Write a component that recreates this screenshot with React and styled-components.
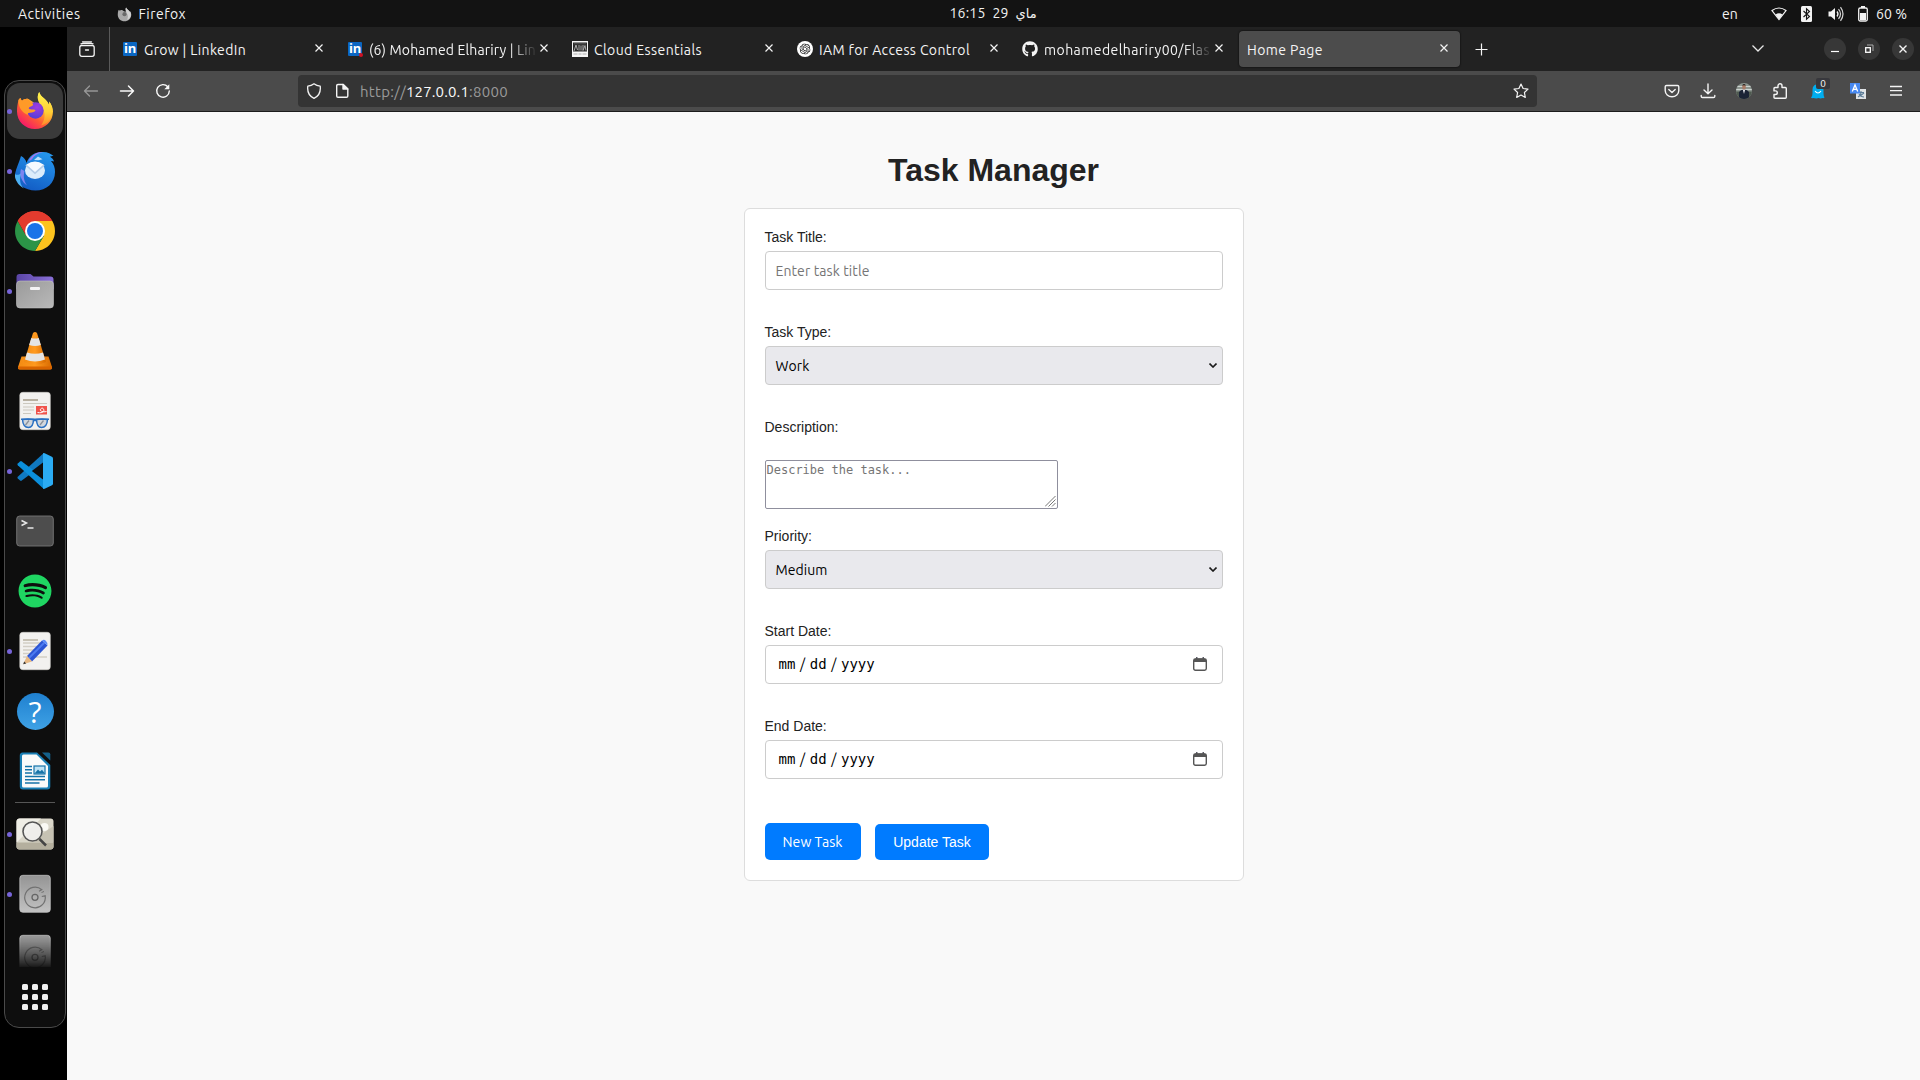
import React, { useLayoutEffect, useRef, useState } from "react";
import styled, { createGlobalStyle, css } from "styled-components";
import { FaGithub, FaSpotify } from "react-icons/fa";
import { SiOpenai } from "react-icons/si";

const UI = `"Ubuntu", "Noto Sans", "Open Sans", sans-serif`;

const GlobalStyle = createGlobalStyle`
  html, body { margin: 0; padding: 0; background: #000; overflow: hidden; }
  *, *::before, *::after { box-sizing: border-box; }
  svg { display: block; flex: none; }
`;

/* ---------- text that keeps a given width ---------- */

const FitSpan = styled.span`
  display: inline-block;
  white-space: nowrap;
  flex: none;
`;

function Fit({ width, children }) {
  const ref = useRef(null);
  const [spacing, setSpacing] = useState(0);
  useLayoutEffect(() => {
    const el = ref.current;
    el.style.letterSpacing = "0px";
    const natural = el.getBoundingClientRect().width;
    const next = (width - natural) / String(children).length;
    el.style.letterSpacing = `${next}px`;
    setSpacing(next);
  }, [width, children]);
  return (
    <FitSpan ref={ref} style={{ letterSpacing: `${spacing}px` }}>
      {children}
    </FitSpan>
  );
}

/* ---------- desktop ---------- */

const Desktop = styled.div`
  width: 1920px;
  height: 1080px;
  display: flex;
  flex-direction: column;
  background: #000;
  font-family: ${UI};
  overflow: hidden;
`;

const TopBar = styled.header`
  height: 27px;
  flex: none;
  background: #131313;
  color: #f2f2f2;
  display: grid;
  grid-template-columns: 1fr auto 1fr;
  align-items: center;
  font-size: 14px;
  line-height: 27px;
`;

const TopLeft = styled.div`
  display: flex;
  align-items: center;
  padding-left: 18px;
  ${FitSpan} { padding-top: 1px; }
`;

const AppMenu = styled.div`
  display: flex;
  align-items: center;
  gap: 7px;
  margin-left: 36px;
`;

const Clock = styled.div`
  display: flex;
  align-items: center;
  align-self: start;
  gap: 7px;
  padding: 1px 0 0 66px;
  direction: ltr;
  line-height: 25px;
`;

const ArabicWord = styled.span`
  font-family: "DejaVu Sans", sans-serif;
  font-size: 13px;
  width: 21px;
  margin-top: -1px;
`;

const TopRight = styled.div`
  display: flex;
  align-items: center;
  justify-content: flex-end;
  padding-right: 13px;
  ${FitSpan} { padding-top: 1px; }
`;

const Tray = styled.div`
  display: flex;
  align-items: center;
  margin: 0 8px 0 33px;
  padding-bottom: 1px;
  svg:nth-child(2) { margin-left: 14px; }
  svg:nth-child(3) { margin-left: 16px; }
  svg:nth-child(4) { margin-left: 14px; }
`;

const Body = styled.div`
  flex: 1;
  display: flex;
  min-height: 0;
`;

/* ---------- dock ---------- */

const DockColumn = styled.aside`
  width: 67px;
  flex: none;
  padding: 53px 0 0 4px;
  background: #000;
`;

const DockPanel = styled.div`
  width: 62px;
  height: 948px;
  border: 1px solid #4a4a4a;
  border-radius: 15px;
  background: #0e0e0e;
  display: flex;
  flex-direction: column;
`;

const DockItem = styled.div`
  height: 60px;
  flex: none;
  display: grid;
  grid-template-columns: 10px 40px 10px;
  align-items: center;
  ${(p) =>
    p.$clipped &&
    css`
      height: 43px;
      align-items: start;
      padding-top: 10px;
      overflow: hidden;
      mask-image: linear-gradient(#000 30%, transparent 105%);
    `}
`;

const DockTile = styled.div`
  height: 56px;
  width: 56px;
  margin: 2px;
  border-radius: 13px;
  background: #3a3a3a;
  display: grid;
  grid-template-columns: 8px 40px 8px;
  align-items: center;
`;

const Dot = styled.i`
  width: 5px;
  height: 5px;
  border-radius: 50%;
  margin-left: ${(p) => p.$x ?? 2}px;
  background: ${(p) => (p.$on ? "#7764d8" : "transparent")};
`;

const DockRule = styled.div`
  height: 1px;
  margin: 1px 10px;
  background: #565656;
  flex: none;
`;

const AppGrid = styled.div`
  height: 60px;
  display: grid;
  grid-template-columns: repeat(3, 6px);
  grid-template-rows: repeat(3, 6px);
  gap: 4px;
  place-content: center;
  i { background: #f2f2f2; border-radius: 1.5px; }
`;

const Svg = ({ s = 40, w, h, vb, children, ...r }) => (
  <svg width={w || s} height={h || s} viewBox={vb || `0 0 ${w || s} ${h || s}`} fill="none" {...r}>
    {children}
  </svg>
);

const FirefoxArt = ({ s = 40 }) => (
  <svg width={s} height={s} viewBox="0 0 40 40">
    <defs>
      <linearGradient id="ffBody" x1="0.85" y1="0.1" x2="0.2" y2="0.95">
        <stop offset="0" stopColor="#fff44f" />
        <stop offset="0.35" stopColor="#ffb02e" />
        <stop offset="0.65" stopColor="#ff5a36" />
        <stop offset="1" stopColor="#f5156c" />
      </linearGradient>
      <linearGradient id="ffFlame" x1="0.5" y1="0" x2="0.5" y2="1">
        <stop offset="0" stopColor="#fff44f" />
        <stop offset="0.6" stopColor="#ffcf35" />
        <stop offset="1" stopColor="#ff8a2a" />
      </linearGradient>
      <radialGradient id="ffGlobe" cx="0.6" cy="0.3" r="0.8">
        <stop offset="0" stopColor="#a13be0" />
        <stop offset="1" stopColor="#4a3fd6" />
      </radialGradient>
    </defs>
    <path d="M3.500 9c.6-.9 1.300-1.500 2-2 .2 1.200.7 2 1.500 2.800C8.500 8.200 11 7.300 13.500 8l6 4h6c-3-3-3.500-7-1.300-11 .5 2.500 2.500 4.500 5 6.500 2.300 1.900 3.800 3.800 4.600 6.200.4-.9.500-2 .4-3.200C36.700 13.500 38 17.300 38 20.500 38 30.500 30 38 20 38S2 30.500 2 20.500C2 16 2.600 12.500 3.500 9z" fill="url(#ffBody)" />
    <path d="M24.200 1c.5 2.500 2.500 4.500 5 6.500 2.300 1.900 3.800 3.800 4.600 6.200.4-.9.500-2 .4-3.200 3.500 5 3.800 10 2.300 14.500-2 5.500-6 8.500-10.500 9.500 3-4 4.500-9 3-14-1-3.500-3.500-6.500-5-9-1.500-3.500-2-6.500.2-10.500z" fill="url(#ffFlame)" />
    <circle cx="20.500" cy="19.500" r="8.200" fill="url(#ffGlobe)" />
    <path d="M3.500 9c.6-.9 1.300-1.500 2-2 .2 1.200.7 2 1.500 2.800C8.500 8.200 11 7.300 13.500 8c.3 1.500 1.500 3 3.500 3.800 1.500 1.300 1.500 2.200 0 3.200-1.500 1-3.200 1.200-3.200 2.200 0 1.300 3 1 6 1.500 1.500.3 0 2.500-3 2.800-3 .2-4.500.5-4 2.500C8 22 3 17 3.500 9z" fill="#ff9a28" />
  </svg>
);

const ThunderbirdArt = () => (
  <Svg>
    <defs>
      <linearGradient id="tbBody" x1="0.7" y1="0" x2="0.3" y2="1">
        <stop offset="0" stopColor="#2596ec" />
        <stop offset="1" stopColor="#125bc4" />
      </linearGradient>
    </defs>
    <path d="M6 5c3 1.500 5 4 5.500 7C14 4 21 .5 28 1c5 0 8 2 10.500 4-1.500 0-2.500.3-3.500.8 2 1.200 3.500 2.700 4 4.700-1-.5-2-.7-3-.6C39 13 40 17 40 21c0 11-8.500 18.500-19.500 18.500C10 39.500 1 33 0 23c1-6 4-11 6-18z" fill="url(#tbBody)" />
    <path d="M13.500 10C17 3.500 22 .8 28 1c-4 1-8 2.500-10.500 6.500-1 1.500-2.500 2-4 2.500z" fill="#a678ee" />
    <path d="M0 23c-1 3 2 11 9 14.500C3.500 32 5 27 6.500 22 4 24 1.500 24.500 0 23z" fill="#4db1f6" />
    <path d="M6 18c-2 7 1 13 6 16.500C8 29 8.500 24 9.500 20z" fill="#7d84ef" />
    <ellipse cx="20" cy="19.500" rx="10" ry="8.500" fill="#dcecfb" />
    <path d="M11 14l9 8 9-8" stroke="#b5cde8" strokeWidth="1.700" />
    <path d="M11.500 13.500q8.500-6 17 0l-8.500 7.500z" fill="#f5faff" />
    <path d="M19 9l4-3.500 4.500 2.700-4 1z" fill="#bde0fa" />
  </Svg>
);

const ChromeArt = () => (
  <Svg>
    <path d="M20 20L2.700 10A20 20 0 0 1 37.300 10z" fill="#e33b2e" />
    <path d="M20 10h17.300A20 20 0 0 1 20 40l8.700-15z" fill="#fcc31e" />
    <path d="M11.300 25L2.700 10A20 20 0 0 0 20 40l8.700-15z" fill="#2b9447" />
    <path d="M20 10h17.300A20 20 0 0 0 2.700 10l8.600 15z" fill="#e33b2e" />
    <circle cx="20" cy="20" r="10" fill="#fff" />
    <circle cx="20" cy="20" r="8" fill="#1a73e8" />
  </Svg>
);

const FilesArt = () => (
  <Svg>
    <defs>
      <linearGradient id="fl" x1="0" y1="0" x2="1" y2="1">
        <stop offset="0" stopColor="#9a9a9a" />
        <stop offset="1" stopColor="#b9b9b9" />
      </linearGradient>
      <linearGradient id="flBack" x1="0" y1="0" x2="1" y2="0">
        <stop offset="0" stopColor="#5a45a5" />
        <stop offset="1" stopColor="#8a70d8" />
      </linearGradient>
    </defs>
    <path d="M1.500 6a3 3 0 0 1 3-3h11l3 2.500h17a3 3 0 0 1 3 3V18h-37z" fill="url(#flBack)" />
    <rect x="1.500" y="10" width="37" height="27" rx="3.500" fill="url(#fl)" stroke="#c4c4c4" strokeWidth=".6" />
    <rect x="15" y="16" width="10" height="3" rx="1" fill="#f4f4f4" />
  </Svg>
);

const VlcArt = () => (
  <Svg>
    <defs>
      <linearGradient id="vlc" x1="0" y1="0" x2="1" y2="0">
        <stop offset="0" stopColor="#f28a12" />
        <stop offset=".5" stopColor="#ff9a1f" />
        <stop offset="1" stopColor="#d86a00" />
      </linearGradient>
    </defs>
    <path d="M6.500 25.500h27L37 36q.3 2.500-2 2.500H5Q2.700 38.500 3 36z" fill="url(#vlc)" />
    <path d="M3.300 35.500h33.400l.3 1.500q-.2 1.500-2 1.500H5q-1.800 0-2-1.500z" fill="#d96500" />
    <path d="M18 2q2-2 4 0l9 29q-11 5.500-22 0z" fill="url(#vlc)" />
    <path d="M16.300 7q3.700 1.200 7.400 0l2.200 7q-5.900 2-11.800 0z" fill="#e4e4e4" />
    <path d="M12 21.500q8 2.500 16 0l2 7q-10 4-20 0z" fill="#e4e4e4" />
  </Svg>
);

const Paper = () => <rect x="4.800" y="1.300" width="30.500" height="37.400" rx="3" fill="#f2f1ef" stroke="#d5d3cf" strokeWidth=".6" />;

const ViewerArt = () => (
  <Svg>
    <Paper />
    <path d="M8 9h15" stroke="#a9a18e" strokeWidth="1.600" />
    <path d="M8 12.500h24M8 16h11M8 19h11M8 22.500h8" stroke="#ccc8be" strokeWidth="1.200" />
    <rect x="21" y="15" width="11" height="8.500" fill="#f0524a" />
    <path d="M22.500 21.500c6 1 7-1.500 6-3.500s-4 0-3 1.500 4.500 1.500 6 1" stroke="#fff" strokeWidth="1" />
    <path d="M7.500 28.500q5.500-1 11 0-.3 8-5 8-5.500 0-6-8zM21.500 28.500q5.500-1 11 0-.5 8-6 8-4.700 0-5-8z" fill="#d2d7dd" stroke="#2a70c2" strokeWidth="1.500" />
    <path d="M6 28.300h28M18.500 29.500h3" stroke="#2a70c2" strokeWidth="1.500" />
    <path d="M10.500 34l3.500-4.500M25 34l3.500-4.500" stroke="#8b929b" strokeWidth="1.300" />
  </Svg>
);

const VSCodeArt = () => (
  <Svg>
    <path d="M28.300 2.400L2.800 25.800q-.9.900 0 1.800l2.300 2q.8.600 1.700 0L35 8.500z" fill="#1079c1" />
    <path d="M28.300 37.600L2.800 14.200q-.9-.9 0-1.800l2.300-2q.8-.6 1.700 0L35 31.500z" fill="#0b8fdc" />
    <path d="M28 2.200q.8-.3 1.700 0l7.200 3.500q1.100.6 1.100 1.900v24.800q0 1.300-1.100 1.900l-7.200 3.500q-.9.300-1.700 0z" fill="#2bacf4" />
    <path d="M28 11.500v17L16.800 20z" fill="#0e0e0e" />
  </Svg>
);

const TerminalArt = () => (
  <Svg>
    <rect x="1.700" y="5" width="36.600" height="30" rx="3" fill="#4d4d4d" stroke="#777" strokeWidth=".9" />
    <path d="M6.500 9.500L11.500 12l-5 2.500M12.500 17h6" stroke="#e8e8e8" strokeWidth="1.500" />
  </Svg>
);

const SpotifyArt = () => (
  <Svg>
    <circle cx="20" cy="20" r="15" fill="#0e0e0e" />
    <g transform="translate(3 3)">
      <FaSpotify size={34} color="#1fd662" />
    </g>
  </Svg>
);

const EditorArt = () => (
  <Svg>
    <Paper />
    <path d="M8 9h15" stroke="#b9b2a2" strokeWidth="1.500" />
    <path d="M8 12h18M8 15.500h14M8 19h14M8 22.500h9M8 26h24" stroke="#d2cec5" strokeWidth="1.300" />
    <path d="M12 25L27 9.500l5.500 5L17 30.500z" fill="#2b55d4" />
    <path d="M14 27L29.500 11.500" stroke="#4c7bf0" strokeWidth="1.800" />
    <path d="M27 9.500q2-1.500 4 .5t1.500 4.500z" fill="#5b8bf7" />
    <path d="M12 25l5 5.500-8.800 2.800z" fill="#e8b985" />
    <path d="M9.200 30.500l2 2-3 .8z" fill="#333" />
  </Svg>
);

const HelpGlyph = styled.div`
  width: 37px;
  height: 37px;
  margin-left: 1.5px;
  border-radius: 50%;
  background: linear-gradient(#1f80cf, #3fa2e6);
  color: #fff;
  display: flex;
  align-items: center;
  justify-content: center;
  font: 400 30px/37px "Open Sans", sans-serif;
`;

const WriterArt = () => (
  <Svg>
    <path d="M7.500 1.500H22L35.300 14v21.500a3 3 0 0 1-3 3H7.800a3 3 0 0 1-3-3V4.500a3 3 0 0 1 2.700-3z" fill="#1a7fb5" />
    <path d="M8.500 3.500H21.500L33 15v20a1.500 1.500 0 0 1-1.500 1.500h-23A1.500 1.500 0 0 1 7 35V5a1.500 1.500 0 0 1 1.500-1.500z" fill="#fafafa" />
    <path d="M27 1.500h6.500q1.800 0 1.800 1.800V9.500z" fill="#14608a" />
    <path d="M10 15.500h7M10 18.800h7M10 22h7M10 25.500h20M10 28.800h20M10 32h14.500" stroke="#1673a8" strokeWidth="1.400" />
    <rect x="19" y="15" width="11" height="8" fill="#bfe2f4" stroke="#1673a8" strokeWidth="1.200" />
    <path d="M19.500 22.500l3.500-4 2 2 2-1.800 3 3.800z" fill="#1673a8" />
  </Svg>
);

const ImageViewerArt = () => (
  <Svg>
    <rect x="1.500" y="4.500" width="37" height="31" rx="3" fill="#d9d6c9" />
    <path d="M1.500 28.500h37v4a3 3 0 0 1-3 3h-31a3 3 0 0 1-3-3z" fill="#b4af9e" />
    <path d="M1.500 28.500L26 4.500H5q-3.500 0-3.500 3.500z" fill="#efeee6" />
    <circle cx="29.500" cy="13" r="4" fill="#faf9f4" />
    <path d="M24 22l14.500-10v16.500H20z" fill="#c6c2b3" />
    <circle cx="17.500" cy="17.500" r="9.500" fill="#f1f1ee" fillOpacity=".9" stroke="#555" strokeWidth="1.600" />
    <path d="M24.500 25l6.500 6.500" stroke="#444" strokeWidth="2.500" />
  </Svg>
);

const DiskArt = () => (
  <Svg>
    <defs>
      <linearGradient id="dk" x1="0" y1="0" x2="0" y2="1">
        <stop offset="0" stopColor="#949494" />
        <stop offset="1" stopColor="#c2c2c2" />
      </linearGradient>
    </defs>
    <rect x="4.800" y="1.300" width="30.500" height="37" rx="3" fill="url(#dk)" stroke="#c9c9c9" strokeWidth=".7" />
    <path d="M24 17.200L26.800 15.700A10.300 10.300 0 1 0 30.200 21.800L26.800 22.500" stroke="#717171" strokeWidth="1.200" />
    <path d="M26.500 18.500L29 17.500" stroke="#717171" strokeWidth="1" />
    <circle cx="20" cy="23.300" r="3" stroke="#666" strokeWidth="1.300" />
  </Svg>
);

function Dock() {
  const top = [
    [ThunderbirdArt, true],
    [ChromeArt, false],
    [FilesArt, true],
    [VlcArt, false],
    [ViewerArt, false],
    [VSCodeArt, true],
    [TerminalArt, false],
    [SpotifyArt, false],
    [EditorArt, true],
  ];
  return (
    <DockColumn>
      <DockPanel>
        <DockTile>
          <Dot $on $x={0} />
          <FirefoxArt />
        </DockTile>
        {top.map(([Art, on], i) => (
          <DockItem key={i}>
            <Dot $on={on} />
            <Art />
          </DockItem>
        ))}
        <DockItem>
          <Dot />
          <HelpGlyph>?</HelpGlyph>
        </DockItem>
        <DockItem>
          <Dot />
          <WriterArt />
        </DockItem>
        <DockRule />
        <DockItem>
          <Dot $on />
          <ImageViewerArt />
        </DockItem>
        <DockItem>
          <Dot $on />
          <DiskArt />
        </DockItem>
        <DockItem $clipped>
          <Dot />
          <DiskArt />
        </DockItem>
        <AppGrid>
          {Array.from({ length: 9 }, (_, i) => (
            <i key={i} />
          ))}
        </AppGrid>
      </DockPanel>
    </DockColumn>
  );
}

/* ---------- browser ---------- */

const Browser = styled.main`
  flex: 1;
  display: flex;
  flex-direction: column;
  min-width: 0;
`;

const TabStrip = styled.div`
  height: 44px;
  flex: none;
  background: #222;
  color: #f4f4f4;
  display: flex;
  align-items: center;
`;

const RecentButton = styled.div`
  width: 43px;
  height: 44px;
  flex: none;
  border-right: 1px solid #5a5a5a;
  margin-right: 2px;
  display: flex;
  align-items: center;
  padding-left: 12px;
`;

const Tab = styled.div`
  width: 221px;
  height: 36px;
  flex: none;
  margin: 0 2px;
  padding: 0 9px 0 8px;
  border-radius: 4px;
  background: ${(p) => (p.$active ? "#4c4c4c" : "transparent")};
  box-shadow: ${(p) => (p.$active ? "0 0 2px #000" : "none")};
  display: flex;
  align-items: center;
  font-size: 14px;
  line-height: 36px;
`;

const TabIcon = styled.span`
  width: 16px;
  height: 16px;
  margin-right: 6px;
  flex: none;
`;

const TabText = styled.div`
  flex: 1;
  min-width: 0;
  padding-top: 1px;
  mask-image: ${(p) => (p.$fade ? "linear-gradient(to right, #000 calc(100% - 26px), rgba(0,0,0,.05))" : "none")};
`;

const CloseCell = styled.span`
  width: 14px;
  margin-left: 1px;
  margin-top: -2px;
  display: flex;
  justify-content: center;
`;

const NewTab = styled.div`
  width: 39px;
  display: flex;
  justify-content: center;
  flex: none;
`;

const StripEnd = styled.div`
  margin-left: auto;
  padding-right: 6px;
  margin-top: -1px;
  display: flex;
  align-items: center;
`;

const WindowButton = styled.div`
  width: 22px;
  height: 22px;
  border-radius: 50%;
  background: #373737;
  margin-left: ${(p) => p.$gap ?? 12}px;
  display: flex;
  align-items: center;
  justify-content: center;
`;

const Toolbar = styled.div`
  height: 41px;
  flex: none;
  background: #4b4b4b;
  border-bottom: 1px solid #1c1c1c;
  display: flex;
  align-items: center;
  color: #f4f4f4;
`;

const NavButtons = styled.div`
  width: 231px;
  flex: none;
  display: flex;
  align-items: center;
  gap: 20px;
  padding-left: 16px;
`;

const UrlBar = styled.div`
  width: 1239px;
  height: 32px;
  flex: none;
  border-radius: 4px;
  background: #343434;
  display: flex;
  align-items: center;
  gap: 12px;
  padding: 0 8px;
`;

const UrlText = styled.div`
  flex: 1;
  margin-left: -2px;
  padding-top: 1px;
  font-size: 15px;
  line-height: 31px;
  color: #9a9a9a;
  display: flex;
  b { font-weight: 400; color: #fbfbfb; }
`;

const Extensions = styled.div`
  flex: 1;
  display: grid;
  grid-template-columns: 35.5px 36.5px 36px 38px 40px 38px 16px;
  align-items: center;
  padding-left: 127px;
`;

const GhostBox = styled.span`
  position: relative;
  width: 16px;
  height: 16px;
`;

const GhostBadge = styled.span`
  position: absolute;
  left: 6px;
  top: -5px;
  width: 14px;
  height: 11px;
  border-radius: 2px;
  background: #38383d;
  color: #fff;
  font-size: 10px;
  line-height: 11px;
  text-align: center;
`;

const LinkedInMark = styled.span`
  display: block;
  width: 14px;
  height: 14px;
  margin: 1px;
  background: #0a66c2;
  color: #fff;
  border-radius: 1px;
  font: 700 13px/12px "Open Sans", sans-serif;
  letter-spacing: -0.3px;
  text-align: center;
  position: relative;
  &::after {
    content: "";
    display: ${(p) => (p.$alert ? "block" : "none")};
    position: absolute;
    right: -1px;
    bottom: -1px;
    width: 4px;
    height: 4px;
    border-radius: 50%;
    background: #d11124;
  }
`;

const NewspaperIcon = () => (
  <Svg s={16}>
    <rect width="16" height="16" fill="#f5f5f5" />
    <rect x="1" y="1.500" width="14" height="9" fill="#2a2a2a" />
    <path d="M2 10l2-6 1.500 5M7 4v5.500M9 4.500v5M11 4v5.500l2-5 1 5" stroke="#b5b5b5" strokeWidth=".9" />
    <path d="M2 2.800h12" stroke="#666" strokeWidth=".8" />
    <path d="M1.500 13h4M6.500 13h3M10.500 13h4" stroke="#b0b0b0" strokeWidth="1.200" />
  </Svg>
);

const OpenAiIcon = () => (
  <Svg s={16}>
    <circle cx="8" cy="8" r="8" fill="#fff" />
    <g transform="translate(2.500 2.500)">
      <SiOpenai size={11} color="#111" />
    </g>
  </Svg>
);

const Cross = ({ s = 8, w = 1.2 }) => (
  <Svg s={s} vb="0 0 8 8" stroke="#f4f4f4" strokeWidth={w}>
    <path d="M.5.5l7 7M7.500.5l-7 7" />
  </Svg>
);

function BrowserTab({ icon, label, width, active, fade }) {
  return (
    <Tab $active={active}>
      {icon && <TabIcon>{icon}</TabIcon>}
      <TabText $fade={fade}>
        <Fit width={width}>{label}</Fit>
      </TabText>
      <CloseCell>
        <Cross />
      </CloseCell>
    </Tab>
  );
}

function BrowserChrome() {
  return (
    <>
      <TabStrip>
        <RecentButton>
          <Svg s={16} stroke="#f4f4f4" strokeWidth="1.300" strokeLinecap="round">
            <rect x=".8" y="4.500" width="14.400" height="10.800" rx="2" />
            <path d="M3.500.8h9M2 2.800q1-.4 2-.4h8q1 0 2 .4M6.500 9h3" />
          </Svg>
        </RecentButton>
        <BrowserTab icon={<LinkedInMark>in</LinkedInMark>} label="Grow | LinkedIn" width={102} />
        <BrowserTab icon={<LinkedInMark $alert>in</LinkedInMark>} label="(6) Mohamed Elhariry | Lin" width={167} fade />
        <BrowserTab icon={<NewspaperIcon />} label="Cloud Essentials" width={108} />
        <BrowserTab icon={<OpenAiIcon />} label="IAM for Access Control" width={151} />
        <BrowserTab icon={<FaGithub size={16} />} label="mohamedelhariry00/Flas" width={166} fade />
        <BrowserTab label="Home Page" width={76} active />
        <NewTab>
          <Svg s={13} stroke="#f4f4f4" strokeWidth="1.200">
            <path d="M6.500.5v12M.5 6.500h12" />
          </Svg>
        </NewTab>
        <StripEnd>
          <Svg w={12} h={7} stroke="#e8e8e8" strokeWidth="1.300">
            <path d="M.5.500L6 6 11.500.500" />
          </Svg>
          <WindowButton $gap={60}>
            <Svg s={10}>
              <path d="M1 7.500h8" stroke="#fff" strokeWidth="1.200" />
            </Svg>
          </WindowButton>
          <WindowButton>
            <Svg s={10}>
              <path d="M3 1h6v6" stroke="#aaa" />
              <rect x="1.700" y="3.700" width="4.600" height="4.600" stroke="#fff" strokeWidth="1.300" />
            </Svg>
          </WindowButton>
          <WindowButton>
            <Cross w={1.4} />
          </WindowButton>
        </StripEnd>
      </TabStrip>
      <Toolbar>
        <NavButtons>
          <Svg s={16} stroke="#979797" strokeWidth="1.300" strokeLinecap="round" strokeLinejoin="round">
            <path d="M14.500 8H1.500M6.500 3L1.500 8l5 5" />
          </Svg>
          <Svg s={16} stroke="#fafafa" strokeWidth="1.500" strokeLinecap="round" strokeLinejoin="round">
            <path d="M1.500 8h13M9.500 3l5 5-5 5" />
          </Svg>
          <Svg s={16} stroke="#fafafa" strokeWidth="1.400" strokeLinecap="round">
            <path d="M12.800 3.800A6.300 6.300 0 1 0 14.300 8" />
            <path d="M14.300 1.300v5H9.300z" fill="#fafafa" stroke="none" />
          </Svg>
        </NavButtons>
        <UrlBar>
          <Svg s={16} stroke="#f4f4f4" strokeWidth="1.300" strokeLinejoin="round">
            <path d="M8 .8C6.500 2 4 3 1.800 3.200 1.200 8 3 13 8 15.300 13 13 14.800 8 14.200 3.200 12 3 9.500 2 8 .8z" />
          </Svg>
          <Svg s={16} stroke="#f4f4f4" strokeWidth="1.400" strokeLinejoin="round">
            <path d="M4 1.500h5.200L13.800 6v7q0 1.300-1.300 1.300H4q-1.300 0-1.300-1.300V2.800Q2.700 1.500 4 1.500z" />
            <path d="M9 1.500V6h4.800z" fill="#f4f4f4" />
          </Svg>
          <UrlText>
            <Fit width={46}>http://</Fit>
            <b>
              <Fit width={63}>127.0.0.1</Fit>
            </b>
            <Fit width={39}>:8000</Fit>
          </UrlText>
          <Svg s={16} stroke="#f4f4f4" strokeWidth="1.200" strokeLinejoin="round">
            <path d="M8 1l2.100 4.500 4.900.600-3.600 3.400.9 4.900L8 12l-4.300 2.400.9-4.900L1 6.100l4.900-.600z" />
          </Svg>
        </UrlBar>
        <Extensions>
          <Svg s={16} stroke="#f4f4f4" strokeWidth="1.400" strokeLinecap="round" strokeLinejoin="round">
            <path d="M2.500 2.500h11q1.300 0 1.300 1.300V7.500a6.800 6.300 0 0 1-13.600 0V3.800q0-1.300 1.300-1.300z" />
            <path d="M4.800 6.500L8 9.500l3.200-3" />
          </Svg>
          <Svg s={16} stroke="#f4f4f4" strokeWidth="1.400" strokeLinecap="round" strokeLinejoin="round">
            <path d="M8 1v9.500M4 7l4 3.800L12 7M1.200 12.500v.700q0 1.300 1.300 1.300h11q1.300 0 1.300-1.300v-.7" />
          </Svg>
          <Svg s={16}>
            <defs>
              <clipPath id="av">
                <circle cx="8" cy="8" r="8" />
              </clipPath>
            </defs>
            <g clipPath="url(#av)">
              <rect width="16" height="16" fill="#8d9690" />
              <path d="M0 3.500h16M0 6.500h16" stroke="#ccd3d0" strokeWidth="1.200" />
              <path d="M0 8.500h16V16H0z" fill="#4f5a50" />
              <path d="M3 16V9q1.500-2.500 5-2.500T13 9v7z" fill="#1b2436" />
              <path d="M6.800 6.500h2.400L8 11z" fill="#e8e8ee" />
              <ellipse cx="8" cy="4" rx="1.900" ry="2.500" fill="#a97b66" />
              <path d="M6.200 2.600Q6.500.9 8 .9t1.800 1.700q-1.800-.8-3.600 0z" fill="#201a18" />
            </g>
          </Svg>
          <Svg s={16} stroke="#f4f4f4" strokeWidth="1.400" strokeLinejoin="round">
            <path d="M2 5.500q0-1 1-1h3V2.800a2 2 0 0 1 4 0v1.700h3.300q1 0 1 1v8.700q0 1-1 1H3q-1 0-1-1V11.500h1.500a1.800 1.800 0 0 0 0-3.600H2z" />
          </Svg>
          <GhostBox>
            <Svg s={16}>
              <path d="M3 15q-1 .5-2-.5 1.500-1.500 1.500-4V6.500A5.500 5.500 0 0 1 13.500 6.500v4q0 2.500 1 4-1 1-2 .5l-2 .5-2-.5-2 .5z" fill="#00aef0" />
              <path d="M5 8q3 4 6 0" stroke="#fff" strokeWidth="1.100" />
            </Svg>
            <GhostBadge>0</GhostBadge>
          </GhostBox>
          <Svg s={16}>
            <rect x="6" y="6" width="10" height="10" fill="#dfe3e6" />
            <path d="M8 9.500h6M11 8v1.500q0 3-3 4.500M9 11q2 3 5 3M10 13l4-3" stroke="#5c7d98" strokeWidth="1.100" />
            <rect width="10" height="10.500" fill="#4688f1" />
            <path d="M2.300 8.500L5 2l2.700 6.500M3.300 6.300h3.400" stroke="#fff" strokeWidth="1.300" />
          </Svg>
          <Svg s={16} stroke="#f4f4f4" strokeWidth="1.300">
            <path d="M2 3.500h12M2 7.700h12M2 12h12" />
          </Svg>
        </Extensions>
      </Toolbar>
    </>
  );
}

/* ---------- page ---------- */

const Page = styled.section`
  flex: 1;
  background: #f9f9f9;
  display: flex;
  flex-direction: column;
  align-items: center;
  font-family: "Liberation Sans", Arial, sans-serif;
  color: #222;
`;

const Title = styled.h1`
  margin: 40px 0 20px;
  font-size: 32px;
  line-height: 36px;
  font-weight: 700;
`;

const Card = styled.form`
  width: 500px;
  height: 673px;
  background: #fff;
  border: 1px solid #ddd;
  border-radius: 6px;
  padding: 20px;
  display: flex;
  flex-direction: column;
`;

const Field = styled.div`
  display: flex;
  flex-direction: column;
  align-items: stretch;
  margin-bottom: ${(p) => p.$after ?? 34}px;
`;

const FieldLabel = styled.label`
  font-size: 14px;
  line-height: 16px;
  margin-bottom: ${(p) => p.$gap ?? 6}px;
`;

const Control = styled.div`
  height: 39px;
  border: 1px solid #ccc;
  border-radius: 4px;
  background: ${(p) => (p.$select ? "#e9e9ed" : "#fff")};
  color: ${(p) => (p.$muted ? "#757575" : "#000")};
  font-family: ${UI};
  font-size: 14px;
  line-height: 37px;
  display: flex;
  align-items: center;
  justify-content: space-between;
  padding: 0 ${(p) => (p.$select ? 5 : 15)}px 0 ${(p) => (p.$date ? 13 : 10)}px;
  > ${FitSpan} { margin-top: 2px; }
`;

const DateText = styled.span`
  font-family: "DejaVu Sans Mono", monospace;
  font-size: 14px;
  display: flex;
  gap: 3.7px;
  i { font-style: normal; font-family: ${UI}; width: 7px; text-align: center; }
`;

const NoteArea = styled.div`
  width: 293px;
  height: 49px;
  border: 1px solid #8f8f9d;
  border-radius: 2px;
  padding: 2px 1px 1px 1px;
  display: flex;
  justify-content: space-between;
  font: 12px/14px "DejaVu Sans Mono", monospace;
  color: #757575;
  svg { align-self: flex-end; }
`;

const Actions = styled.div`
  display: flex;
  align-items: flex-end;
  gap: 14px;
  margin-top: 10px;
`;

const ActionButton = styled.div`
  width: ${(p) => p.$w}px;
  height: ${(p) => p.$h}px;
  border-radius: 5px;
  background: #007bff;
  color: #fff;
  font-family: ${(p) => (p.$ui ? UI : `"Liberation Sans", Arial, sans-serif`)};
  font-size: 14px;
  display: flex;
  align-items: center;
  justify-content: center;
  padding-left: ${(p) => (p.$ui ? 0 : 1)}px;
`;

const Chevron = () => (
  <Svg w={8} h={5} stroke="#1a1a1a" strokeWidth="1.600">
    <path d="M.5.500L4 4 7.500.500" />
  </Svg>
);

const CalendarIcon = () => (
  <Svg w={14} h={15}>
    <path d="M3 0h1.500v2H3zM9.500 0H11v2H9.500z" fill="#5b5b66" />
    <rect x=".7" y="2" width="12.600" height="11.300" rx="1.700" stroke="#555" strokeWidth="1.400" />
    <path d="M.7 3.300Q.7 1.500 2.500 1.500h9q1.800 0 1.800 1.800V5H.7z" fill="#555" />
  </Svg>
);

const DateControl = () => (
  <Control $date>
    <DateText>
      <span>mm</span>
      <i>/</i>
      <span>dd</span>
      <i>/</i>
      <span>yyyy</span>
    </DateText>
    <CalendarIcon />
  </Control>
);

function TaskPage() {
  return (
    <Page>
      <Title>Task Manager</Title>
      <Card>
        <Field>
          <FieldLabel>Task Title:</FieldLabel>
          <Control $muted>
            <Fit width={94}>Enter task title</Fit>
          </Control>
        </Field>
        <Field>
          <FieldLabel>Task Type:</FieldLabel>
          <Control $select>
            <Fit width={34}>Work</Fit>
            <Chevron />
          </Control>
        </Field>
        <Field $after={19}>
          <FieldLabel $gap={25}>Description:</FieldLabel>
          <NoteArea>
            <span>Describe the task...</span>
            <Svg s={11} stroke="#777" strokeWidth="1">
              <path d="M0 10.500L10.500 0M3.500 10.500l7-7M7 10.500L10.500 7" />
            </Svg>
          </NoteArea>
        </Field>
        <Field>
          <FieldLabel>Priority:</FieldLabel>
          <Control $select>
            <Fit width={52}>Medium</Fit>
            <Chevron />
          </Control>
        </Field>
        <Field>
          <FieldLabel>Start Date:</FieldLabel>
          <DateControl />
        </Field>
        <Field>
          <FieldLabel>End Date:</FieldLabel>
          <DateControl />
        </Field>
        <Actions>
          <ActionButton $w={96} $h={37} $ui>
            <Fit width={60}>New Task</Fit>
          </ActionButton>
          <ActionButton $w={114} $h={36}>
            Update Task
          </ActionButton>
        </Actions>
      </Card>
    </Page>
  );
}

export default function App() {
  return (
    <Desktop>
      <GlobalStyle />
      <TopBar>
        <TopLeft>
          <Fit width={62.5}>Activities</Fit>
          <AppMenu>
            <Svg s={15} vb="0 0 40 40">
              <path d="M3.500 9l2-2 1.500 2.800C8.500 8.200 11 7.300 13.500 8l6 4h6c-3-3-3.500-7-1.300-11 3 7 9 7 9.600 12.700l.4-3.200C36.700 13.500 38 17.300 38 20.500 38 30.500 30 38 20 38S2 30.500 2 20.500C2 16 2.600 12.500 3.500 9z" fill="#a9a9a9" />
              <path d="M24.200 1c3 7 9 7 9.600 12.700l.4-3.200c6 9 3 20-8 24 4-7 4-12 0-18-2-4-5-10-2-15.500z" fill="#d2d2d2" />
              <circle cx="20" cy="19" r="5.500" fill="#6a6a6a" />
            </Svg>
            <Fit width={47.5}>Firefox</Fit>
          </AppMenu>
        </TopLeft>
        <Clock>
          <Fit width={36}>16:15</Fit>
          <Fit width={16}>29</Fit>
          <ArabicWord>ماي</ArabicWord>
        </Clock>
        <TopRight>
          <Fit width={16}>en</Fit>
          <Tray>
            <Svg w={16} h={14}>
              <path d="M1 3.500Q8-1.500 15 3.500L8 12.500z" stroke="#f2f2f2" strokeWidth="1.200" />
              <path d="M4.500 7.500Q8 5 11.500 7.500L8 12.500z" fill="#f2f2f2" />
            </Svg>
            <Svg w={11} h={16}>
              <rect width="11" height="16" rx="1.500" fill="#f2f2f2" />
              <path d="M2.500 5l6 5.500-3 2.700V2.800l3 2.700-6 5.500" stroke="#131313" strokeWidth="1.100" />
            </Svg>
            <Svg w={16} h={16}>
              <path d="M.5 5.500H3L7 2v12L3 10.500H.5z" fill="#f2f2f2" />
              <path d="M9 5.500q2 2.500 0 5" stroke="#f2f2f2" strokeWidth="1.300" />
              <path d="M10.500 3.200q4 4.800 0 9.600M12.500 1.200q5 6.800 0 13.600" stroke="#d5d5d5" strokeWidth="1.200" />
            </Svg>
            <Svg w={10} h={16}>
              <rect x="3" y="0" width="4" height="2" fill="#f2f2f2" />
              <rect x=".7" y="2" width="8.600" height="13" rx="1.500" stroke="#f2f2f2" strokeWidth="1.300" />
              <rect x="2" y="7" width="6" height="7" fill="#f2f2f2" />
            </Svg>
          </Tray>
          <Fit width={31}>60 %</Fit>
        </TopRight>
      </TopBar>
      <Body>
        <Dock />
        <Browser>
          <BrowserChrome />
          <TaskPage />
        </Browser>
      </Body>
    </Desktop>
  );
}
